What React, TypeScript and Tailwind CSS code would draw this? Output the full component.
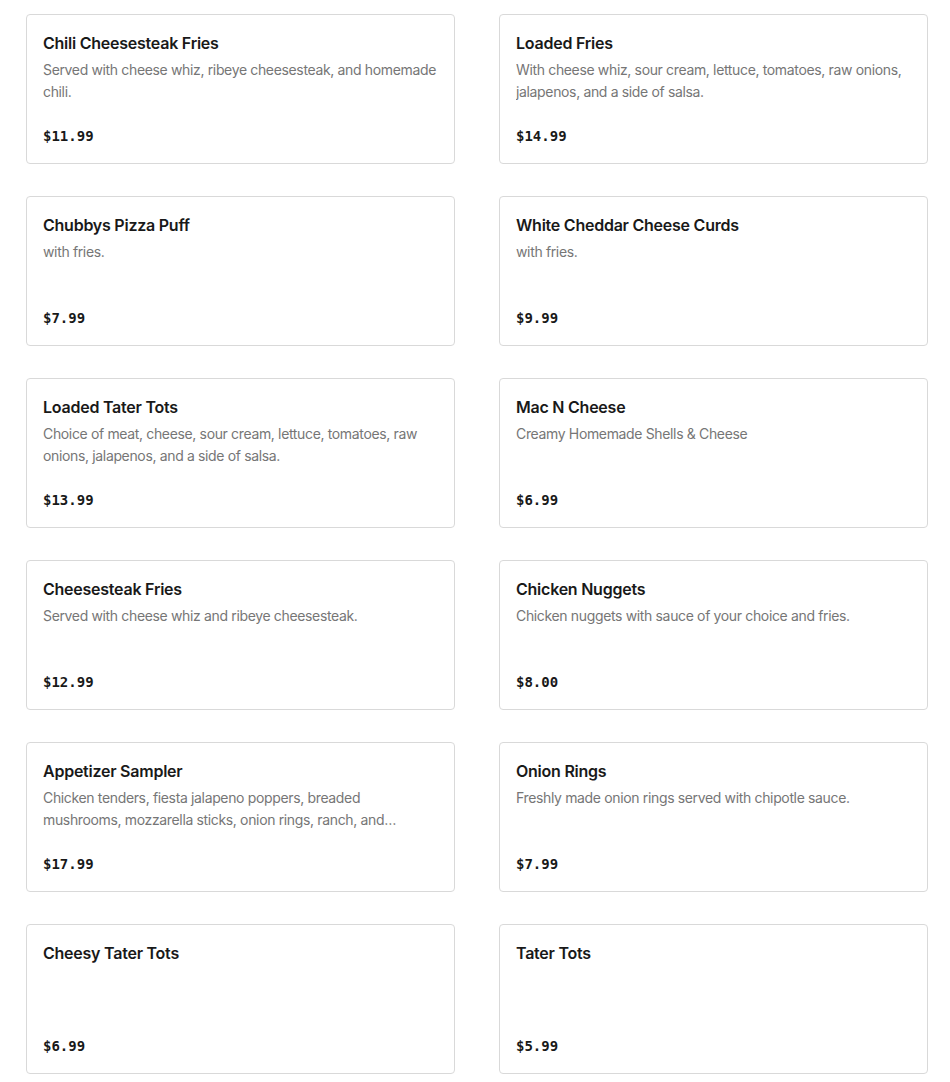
import React from "react";

type Item = { name: string; desc?: string; price: string };

const items: Item[] = [
  { name: "Chili Cheesesteak Fries", desc: "Served with cheese whiz, ribeye cheesesteak, and homemade chili.", price: "$11.99" },
  { name: "Loaded Fries", desc: "With cheese whiz, sour cream, lettuce, tomatoes, raw onions, jalapenos, and a side of salsa.", price: "$14.99" },
  { name: "Chubbys Pizza Puff", desc: "with fries.", price: "$7.99" },
  { name: "White Cheddar Cheese Curds", desc: "with fries.", price: "$9.99" },
  { name: "Loaded Tater Tots", desc: "Choice of meat, cheese, sour cream, lettuce, tomatoes, raw onions, jalapenos, and a side of salsa.", price: "$13.99" },
  { name: "Mac N Cheese", desc: "Creamy Homemade Shells & Cheese", price: "$6.99" },
  { name: "Cheesesteak Fries", desc: "Served with cheese whiz and ribeye cheesesteak.", price: "$12.99" },
  { name: "Chicken Nuggets", desc: "Chicken nuggets with sauce of your choice and fries.", price: "$8.00" },
  { name: "Appetizer Sampler", desc: "Chicken tenders, fiesta jalapeno poppers, breaded mushrooms, mozzarella sticks, onion rings, ranch, and marinara sauce.", price: "$17.99" },
  { name: "Onion Rings", desc: "Freshly made onion rings served with chipotle sauce.", price: "$7.99" },
  { name: "Cheesy Tater Tots", price: "$6.99" },
  { name: "Tater Tots", price: "$5.99" },
];

export default function App() {
  return (
    <div className="bg-white min-h-screen pt-[14px] pl-[26px] pr-[22px]" style={{ fontFamily: "Inter, 'Noto Sans', sans-serif" }}>
      <div className="grid grid-cols-[429px_429px] gap-x-[44px] gap-y-[32px]">
        {items.map((it) => (
          <div key={it.name} className="h-[150px] border border-[#d9d9d9] rounded-[4px] px-4 pt-4 pb-[17px] flex flex-col">
            <div className="text-[16px] leading-[24px] font-semibold text-[#191919] tracking-[-0.015em]">{it.name}</div>
            {it.desc && (
              <div className="mt-1 text-[14px] leading-[22px] text-[#767676] tracking-[-0.025em] line-clamp-2">{it.desc}</div>
            )}
            <div className="mt-auto text-[14px] leading-[20px] font-bold text-[#191919]" style={{ fontFamily: "'DejaVu Sans Mono', monospace" }}>
              {it.price}
            </div>
          </div>
        ))}
      </div>
    </div>
  );
}
